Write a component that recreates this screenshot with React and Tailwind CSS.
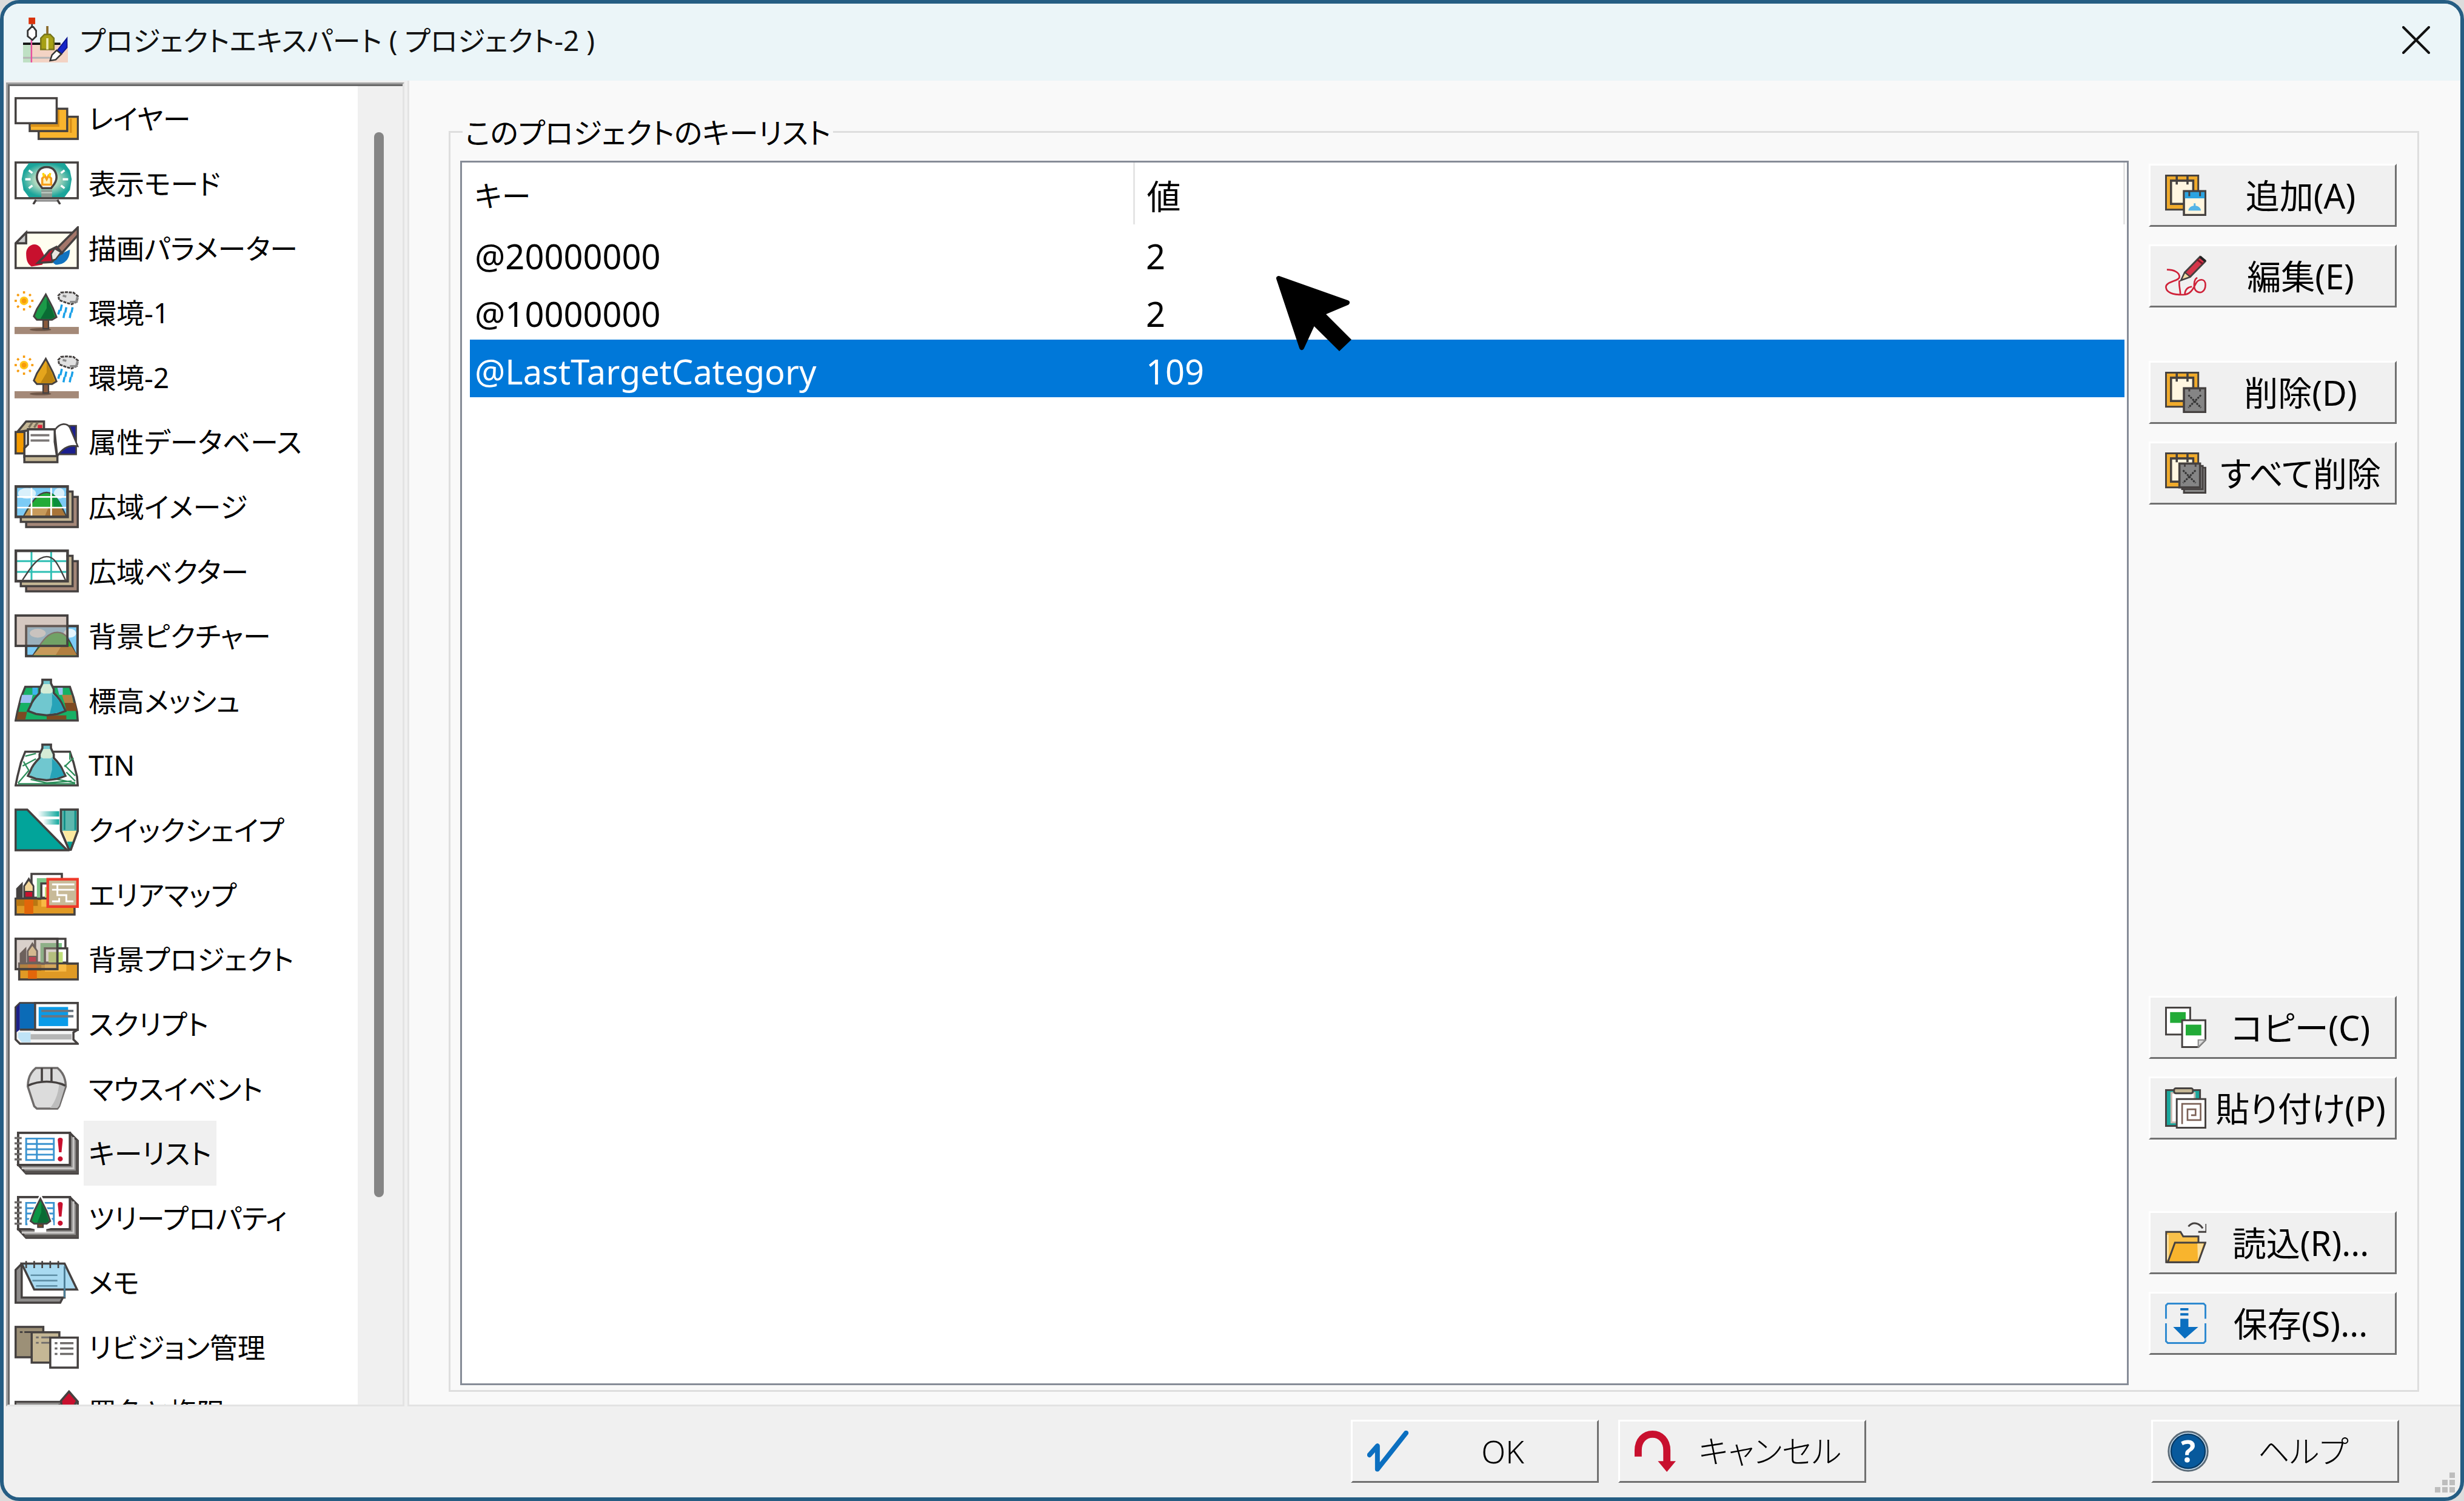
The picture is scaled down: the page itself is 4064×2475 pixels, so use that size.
import React, { useState } from "react";

const INK = "#454140";

/* ---------- sidebar icons, drawn on a 36 x 24 grid ---------- */

function SideIcon({ children }) {
  return (
    <svg viewBox="0 0 36 24" className="h-[71px] w-[106px] shrink-0" fill="none" stroke={INK} strokeWidth="1.2" aria-hidden="true">
      {children}
    </svg>
  );
}

const LayerIcon = () => (
  <SideIcon>
    <rect x="13.5" y="11" width="22" height="12.4" fill="#f9b42d" />
    <path d="M31.500 12v8" stroke="#d98f17" />
    <rect x="8.5" y="6.5" width="21" height="12.5" fill="#f9b42d" />
    <path d="M24.5 7v9H9" stroke="#d98f17" />
    <rect x=".6" y=".6" width="23" height="14" fill="#fff" />
  </SideIcon>
);

const DisplayIcon = () => (
  <SideIcon>
    <defs>
      <radialGradient id="screenGlow">
        <stop offset="0" stopColor="#e4efd2" />
        <stop offset=".5" stopColor="#a9d6bd" />
        <stop offset="1" stopColor="#1ba59b" />
      </radialGradient>
    </defs>
    <rect x=".6" y=".6" width="34.800" height="20" fill="#fff" />
    <path d="M8 1h20l3 4 1 5-1 6-3 4H8l-3-4-1-6 1-5z" fill="url(#screenGlow)" stroke="none" />
    <path d="M6 10h3M27 10h3M8 5l2 1.500M28 5l-2 1.500M8 15l2-1.500M28 15l-2-1.500" stroke="#fff" />
    <path d="M18 3.200c4 0 5.500 2.800 5.500 5.800S21 14 20.500 15h-5c-.5-1-3-3-3-6S14 3.200 18 3.200z" fill="#fff" />
    <path d="M15.500 13V9.500l1.500-1.500 1 2 1-2 1.500 1.500V13z" fill="#fff3bd" stroke="#f6a01c" />
    <path d="M16.500 8.500l-.5-2M19.500 8.500l.5-2" stroke="#ffd800" />
    <path d="M15 16h6v4h-6z" fill="#8d9a92" stroke="none" />
    <path d="M15 17.500h6" stroke="#c2cec6" strokeWidth=".7" />
    <path d="M12 21.500h12v1H12z" fill="#8b8b8b" stroke="none" />
    <path d="M12 21.500l-1.500 2.500M24 21.500l1.500 2.500" />
  </SideIcon>
);

const DrawIcon = () => (
  <SideIcon>
    <path d="M6.500 3.500h28.900v19.900H.6V9.500z" fill="#fffef0" />
    <path d="M6.500 3.500v6H.6z" fill="#c9c9c9" />
    <path d="M6.500 15c0-4 5-7 8-3l3 6-2 3.500-6 1c-2.500-1.500-3-4-3-7.500z" fill="#c8102e" stroke="none" />
    <path d="M31 13l-6 3-4 4 2 1.500c5 0 8-3 8-8.500z" fill="#1173c0" stroke="none" />
    <path d="M35.400.6L24 12l2.500 3 8.900-10z" fill="#a3766a" />
    <path d="M23.500 11.500l-4 2-2.500 3-4 4 8-.5 3-3.500 2.500-1.500z" fill="#c8102e" />
    <path d="M22.500 12.500l-2 3 .5 3.500 2-.5 3-4z" fill="#e8e6e0" strokeWidth=".8" />
  </SideIcon>
);

function EnvIcon({ light, dark }) {
  return (
    <SideIcon>
      <rect x="0" y="20" width="36" height="4" fill="#a48978" stroke="none" />
      <ellipse cx="14.500" cy="21.500" rx="6" ry=".8" fill="#6f5748" stroke="none" />
      <rect x="16" y="15" width="3" height="6" fill="#8a5a3c" strokeWidth=".8" />
      <path d="M17.500 1.800l2.500 4.700 1.500 3 2 5-2.500 1.500h-8.500l-1.700-2 1.700-4L15 6z" fill={light} strokeWidth="1" />
      <path d="M18 4l2.500 5 2 5.500-2 1h-6l3.500-6z" fill={dark} stroke="none" />
      <circle cx="5.300" cy="5.400" r="1.900" fill="#f79b0b" stroke="#ffc61a" strokeWidth="1" />
      <path d="M5.300 0v1.300M5.300 9.500v1.300M0 5.400h1.300M9.300 5.400h1.300M1.500 1.700l.9.9M8.200 8.200l.9.9M9.100 1.700l-.9.9M2.400 8.200l-.9.9" stroke="#f79b0b" />
      <path d="M26 .8l3-.3 4 .3 2.500 2-.5 3-3 1.500-3-.8-4-1.500-.5-2.500z" fill="#e1e1e1" strokeWidth="1" strokeDasharray="1.700 .5" />
      <path d="M31 6h3.500l.8-3" stroke="#8c8c8c" />
      <path d="M27 2.500l2 .5" stroke="#8c8c8c" />
      <path d="M26.500 7.500l-.8 3.500M25.200 10.500l-.7 2.500M29 9l-.6 3M28 12l-.6 3M32.500 9l-.6 3M31.500 12l-.6 3" stroke="#19a0e8" />
    </SideIcon>
  );
}

const DatabaseIcon = () => (
  <SideIcon>
    <path d="M1.500 6.500l5-5.900h10v5h-9z" fill="#c5b795" />
    <path d="M8 4l2-3M11 4l2-3" stroke="#7a6f5c" />
    <rect x="13" y="2.500" width="2.500" height="2.500" fill="#e3223a" stroke="none" />
    <rect x=".6" y="6.500" width="5" height="12" fill="#f59b00" />
    <path d="M30 3h4.500V19H24v-3z" fill="#1b1f8f" strokeWidth=".9" />
    <path d="M22.500 5.500c3-4.500 7-4 8.500-1.500l4.400 10.500c-5-1-8.500 1-11.400 5.500z" fill="#fff" strokeWidth=".9" />
    <path d="M7.500 5h15v7l1.300 8.500H5.500v-5l2-2z" fill="#fff" />
    <path d="M9 8.300h10.500M9 11.300h10.500" stroke="#7b7776" strokeWidth="1.300" />
    <rect x="5.500" y="20" width="18.500" height="3.400" fill="#c5b795" />
  </SideIcon>
);

function Stack({ children }) {
  return (
    <SideIcon>
      <rect x="6.500" y="6.500" width="28.900" height="16.900" fill="#a48778" />
      <rect x="3.500" y="3.500" width="29" height="17" fill="#c5b795" />
      {children}
      <rect x=".7" y=".7" width="29" height="17" strokeWidth="1.500" />
    </SideIcon>
  );
}

const WideImageIcon = () => (
  <Stack>
    <rect x="1" y="1" width="28" height="16" fill="#7ccbf5" stroke="none" />
    <ellipse cx="7" cy="4.500" rx="5" ry="3" fill="#d9f0fb" stroke="none" />
    <ellipse cx="25" cy="4.500" rx="3" ry="3" fill="#d9f0fb" stroke="none" />
    <path d="M5 17.500C9 10 13 4 18 4s8 7 11 13.500z" fill="#22ab38" strokeWidth=".8" />
    <path d="M21 4.500l1 8 5 0c-2-4-4-7-6-8z" fill="#0b8f3c" stroke="none" />
    <path d="M5.500 17.200l3-4.700h17.500l2.500 4.700z" fill="#c79a5b" stroke="none" />
    <path d="M17 17.200l2-4.700h7l2.500 4.700z" fill="#a87438" stroke="none" />
    <path d="M9.500 1v16M20.500 1v16M1 6.500h28M1 12.500h28" stroke="#fff" strokeWidth=".9" />
  </Stack>
);

const WideVectorIcon = () => (
  <Stack>
    <rect x="1" y="1" width="28" height="16" fill="#fff" stroke="none" />
    <path d="M9.500 1v16M20.500 1v16M1 6.500h28M1 12.500h28" stroke="#2fbfb4" strokeWidth="1" />
    <path d="M4.500 17C9 10 13 4 18 4s7 6 10.500 13" strokeWidth=".8" />
  </Stack>
);

const BackPictureIcon = () => (
  <SideIcon>
    <rect x="6.500" y="6.500" width="28.800" height="16.800" fill="#7ccbf5" strokeWidth="1.400" />
    <ellipse cx="31" cy="10.500" rx="3.500" ry="2.500" fill="#e4f4fc" stroke="none" />
    <ellipse cx="13" cy="10.500" rx="4.500" ry="2.500" fill="#e4f4fc" stroke="none" />
    <path d="M10 23.300C15 16 18 10 24 10s7 6 11 13.300z" fill="#22ab38" strokeWidth=".7" />
    <path d="M10.500 22.800l4-4.800h17l3 4.800z" fill="#c79a5b" stroke="none" />
    <path d="M23 22.800l3-4.800h6l3 4.800z" fill="#b27f40" stroke="none" />
    <rect x=".6" y=".6" width="29" height="17" fill="#b39b8c" fillOpacity=".55" strokeWidth="1.300" />
    <rect x="6.500" y="6.500" width="28.800" height="16.800" strokeWidth=".8" strokeOpacity=".6" />
  </SideIcon>
);

const Cone = () => (
  <g>
    <path d="M15.600 0v2.500L14 6v2c-1.500 1.500-4 4-5 7l-1.500 3 4.500 1.700 6 .8 6-.8 4.500-1.700L27 15c-1-3-3.500-5.500-5-7V6l-1.600-3.500V0z" fill="#70c7cf" />
    <path d="M21 8.500c2 1.500 4.500 4 5.500 6.500l1.200 2.800-4 1.300-4 .5 1.300-5z" fill="#27a3b8" stroke="none" />
    <path d="M16.200 3h3.600L21.300 6v1.500l-1.300.8h-4l-1.300-.8V6z" fill="#d5ecd6" stroke="none" />
    <path d="M15.200.6h5.600" />
  </g>
);

const MeshIcon = () => (
  <SideIcon>
    <path d="M6 4.500h25l2 6 2 8 .4 4.900H.6l1-4.900 2-8z" fill="#16b166" />
    <path d="M4.200 9h6L9 13.500H3.200zM27 5h-3l1 4h2z" fill="#9cc0f2" stroke="none" />
    <path d="M2 18.500h5l-1 4.400H1.200zM28 13.500h6l1 4.500h-6zM18 20.500h11v2.400H18z" fill="#7d4a22" stroke="none" />
    <path d="M26.500 9h5.500l1 4.500h-5z" fill="#b57f42" stroke="none" />
    <path d="M10 5h3v4h-3z" fill="#3fb4ec" stroke="none" />
    <Cone />
  </SideIcon>
);

const TinIcon = () => (
  <SideIcon>
    <path d="M6 4.500h25l2 6 2 8 .4 4.900H.6l1-4.900 2-8z" fill="#fff" />
    <path d="M6 7l6-1.500M4.500 12.500L12 8.500M5 10l3 5M2 22l6-7M2 22.500h32M9 20l9 2 14-1M33 8l-5 5M28 12l6 6M31 5v4M29 16l5 5M24 20l10 2" stroke="#2e8f5c" strokeWidth=".8" />
    <Cone />
  </SideIcon>
);

const QuickShapeIcon = () => (
  <SideIcon>
    <defs>
      <linearGradient id="speed">
        <stop offset="0" stopColor="#fff" />
        <stop offset="1" stopColor="#0fa79c" />
      </linearGradient>
    </defs>
    <path d="M.6.600h6.500L29.500 23.400H.6z" fill="#02a49a" />
    <rect x="13" y="1.500" width="12" height="3" fill="url(#speed)" stroke="none" />
    <rect x="16" y="6" width="9" height="3" fill="url(#speed)" stroke="none" />
    <path d="M26 .6h9.400v12L31.500 23h-1L26 12.500z" fill="#fff" />
    <rect x="26.500" y="1" width="8.500" height="11.500" fill="#5db8ae" stroke="none" />
    <path d="M28 1v11M34 1v11" stroke="#0d8e86" strokeWidth=".9" />
    <path d="M27 12.500h8l-2.500 6h-3z" fill="#fce9a0" stroke="none" />
    <path d="M29.500 18.500h3l-1 4h-1z" fill="#02a49a" stroke="none" />
    <path d="M26 12.500V.6h9.400v11.900" />
    <path d="M26 12.500l4.500 10.500h1l3.900-10.500" />
  </SideIcon>
);

const BoxContents = () => (
  <g>
    <path d="M9.500 14V.600h17V14z" fill="#fff" />
    <rect x="12.500" y="3" width="12" height="11" fill="#7fc68a" stroke="none" />
    <path d="M15 14V6h12.500v8z" fill="#fff" />
    <rect x="17" y="8" width="8" height="6" fill="#bfe07a" stroke="none" />
    <path d="M1.500 14V9l2.500-2.500V14z" fill="#454140" />
    <path d="M5.500 14V7.500l2.500-4 2.500 4V14z" fill="#c8102e" />
    <path d="M5.500 10.500v-3L8 4l2.500 3.500v3z" fill="#f5d79a" strokeWidth=".7" />
    <path d="M.6 14.500h33v8.900H.6z" fill="#e09a25" />
    <path d="M1 15h12v3.500H1z" fill="#b97712" stroke="none" />
    <path d="M5.500 15h5v8h-5z" fill="#e2660a" stroke="none" />
    <path d="M15 15h12v4H15z" fill="#f8b944" stroke="none" />
  </g>
);

const AreaMapIcon = () => (
  <SideIcon>
    <BoxContents />
    <rect x="18.600" y="3.600" width="16.700" height="15.300" fill="#c8ba98" stroke="#ee3a2a" strokeWidth="1.500" />
    <path d="M21 6.500h12.500M21 9.500h12.500M24 6.500v6h5v3.500h4M21 16h4v-2" stroke="#fff" strokeWidth="1" />
  </SideIcon>
);

const BackProjectIcon = () => (
  <SideIcon>
    <g transform="translate(2 0)">
      <BoxContents />
    </g>
    <rect x=".6" y=".6" width="23.400" height="17" fill="#a58f82" fillOpacity=".42" strokeWidth="1.300" />
  </SideIcon>
);

const ScriptIcon = () => (
  <SideIcon>
    <path d="M3 .6h32.400v15L33 17v4l2.400 2.400H3L.6 21V3z" fill="#f4f4f4" />
    <path d="M1 3l2-2v14.500l-2 1.500z" fill="#1d2088" stroke="none" />
    <rect x="3" y="1" width="8" height="14.500" fill="#0b6bb7" stroke="none" />
    <rect x="11.500" y=".6" width="23.900" height="15" fill="#fff" />
    <rect x="13.500" y="2.800" width="16.500" height="10.700" fill="#0a9be8" stroke="none" />
    <path d="M15 5h18M15 8h18" stroke="#6b7680" strokeWidth="1.300" />
    <path d="M3 15.500h32.500" />
    <path d="M2 17h7v5.500H4L2 20z" fill="#bfe3f6" stroke="none" />
    <path d="M9 19.500h23" stroke="#b5b5b5" strokeWidth="3" />
  </SideIcon>
);

const MouseIcon = () => (
  <SideIcon>
    <path d="M12 .6h12c3 2.400 4.700 6 4.700 10.400L25 22l-1 1.400H12.500L11 22 7.400 11C7.400 6.600 9 3 12 .6z" fill="#dcdcdc" stroke="#6e6b6a" />
    <path d="M28.300 9.500c-1-.5-2-.9-3.300-1.100-.2 5-1.500 10-5 14.600h4l1-1.200L28.300 11z" fill="#bdbdbd" stroke="none" />
    <path d="M7.500 10.500C14 7.500 22 7.500 28.500 10.500" />
    <path d="M15.300.6v7.800M20.700.6v7.800" />
  </SideIcon>
);

function Notebook({ children }) {
  return (
    <SideIcon>
      <path d="M2 18.500l4.500 4.900h28.900V5L31 .6z" fill="#8e8c8b" />
      <path d="M4 20.500h29V3" stroke="#c9c7c6" strokeWidth="1" />
      <path d="M5.500 22.500H35V4.500" stroke="#55514f" strokeWidth="1.400" />
      <rect x="2" y=".6" width="29" height="18" fill="#fff" strokeWidth="1.300" />
      <path d="M0 3.500h4M0 6.500h4M0 9.500h4M0 12.500h4M0 15.500h4" stroke="#6e6b6a" />
      {children}
      <path d="M24.200 4.500c0-1.500 2.800-1.500 2.800 0l-.7 7h-1.400z" fill="#c8102e" stroke="none" />
      <circle cx="25.600" cy="15.200" r="1.400" fill="#c8102e" stroke="none" />
    </SideIcon>
  );
}

const SheetLines = () => (
  <path d="M6.500 3.800h15.500v12H6.500zM12.500 3.800v12M6.500 6.800h15.500M6.500 9.800h15.500M6.500 12.800h15.500" stroke="#3a93d0" strokeWidth="1" />
);

const KeyListIcon = () => (
  <Notebook>
    <SheetLines />
  </Notebook>
);

const TreePropIcon = () => (
  <Notebook>
    <SheetLines />
    <path d="M14.500 0L8 15v2l4 1v1.500h5V18l4-1v-2z" fill="#fff" stroke="#fff" strokeWidth="1.500" />
    <rect x="13" y="14.500" width="3" height="3" fill="#7a4a2a" strokeWidth=".7" />
    <path d="M14.500 1.500l3.500 7 2 5.500-2 1.500h-7L9 14l2-5.500z" fill="#0c9444" strokeWidth="1" />
    <path d="M15 4l2.500 5 1.700 5-1.500 1h-5L15 9z" fill="#0a6b34" stroke="none" />
  </Notebook>
);

const MemoIcon = () => (
  <SideIcon>
    <path d="M.6 5l3-3h24v17.500l-2 3.900H.6z" fill="#8e8c8b" />
    <path d="M4 3h24v17.500H4z" fill="#fff" />
    <path d="M4 1.500h24l7 14.500H11z" fill="#a9daf1" />
    <path d="M28 3v17.500" stroke="#4d7f98" strokeWidth="1" />
    <path d="M9 8h15M10 11h14M12 14h12" stroke="#5f8fa6" strokeWidth=".9" />
    <path d="M6.500 0v4M11 0v4M15.500 0v4M20 0v4M24.500 0v4" strokeWidth=".9" />
  </SideIcon>
);

const RevisionIcon = () => (
  <SideIcon>
    <rect x=".6" y=".6" width="15.500" height="17" fill="#9c9077" />
    <path d="M3 3.500h1.500M5.500 3.500h5" strokeWidth="1" />
    <rect x="9.600" y="3.600" width="15.500" height="17" fill="#c5b795" />
    <path d="M12 6.500h1.500M15 6.500h5M12 9.500h1.500M15 9.500h5" stroke="#6e6b6a" strokeWidth="1" />
    <rect x="20" y="6.600" width="15.400" height="16.800" fill="#fff" />
    <path d="M22.500 9.700H24M25.500 9.700H33M22.500 12.700H24M25.500 12.700H33M22.500 15.700H24M25.500 15.700H33" stroke="#6e6b6a" />
  </SideIcon>
);

const SignIcon = () => (
  <SideIcon>
    <rect x=".6" y="6.600" width="34.800" height="16.800" fill="#e9e4dc" />
    <rect x="1" y="7" width="34" height="2" fill="#8e8c8b" stroke="none" />
    <path d="M30.500.8l4.500 5.200-2.500 4.500-6-.5-.5-4z" fill="#c8102e" />
    <path d="M25 8l3 3-5 2z" fill="#f5d79a" strokeWidth=".6" />
  </SideIcon>
);

const sections = [
  ["レイヤー", <LayerIcon />],
  ["表示モード", <DisplayIcon />],
  ["描画パラメーター", <DrawIcon />],
  ["環境-1", <EnvIcon light="#1b9a48" dark="#0a6b34" />],
  ["環境-2", <EnvIcon light="#e5a51c" dark="#bd8410" />],
  ["属性データベース", <DatabaseIcon />],
  ["広域イメージ", <WideImageIcon />],
  ["広域ベクター", <WideVectorIcon />],
  ["背景ピクチャー", <BackPictureIcon />],
  ["標高メッシュ", <MeshIcon />],
  ["TIN", <TinIcon />],
  ["クイックシェイプ", <QuickShapeIcon />],
  ["エリアマップ", <AreaMapIcon />],
  ["背景プロジェクト", <BackProjectIcon />],
  ["スクリプト", <ScriptIcon />],
  ["マウスイベント", <MouseIcon />],
  ["キーリスト", <KeyListIcon />],
  ["ツリープロパティ", <TreePropIcon />],
  ["メモ", <MemoIcon />],
  ["リビジョン管理", <RevisionIcon />],
  ["署名と権限", <SignIcon />],
];

/* ---------- button icons, drawn on a 23 x 23 grid ---------- */

function ButtonIcon({ children }) {
  return (
    <svg viewBox="0 0 23 23" className="size-[68px] shrink-0" fill="none" stroke={INK} strokeWidth="1" aria-hidden="true">
      {children}
    </svg>
  );
}

const Board = () => (
  <g>
    <rect x=".5" y=".5" width="18" height="19" fill="#f0ab2c" />
    <rect x="3.300" y="3.300" width="12.400" height="13" fill="#fff6e0" strokeWidth="1.200" />
    <path d="M3 3.300h13M6.500 0v5.500M12.500 0v5.500" strokeWidth="1.200" />
  </g>
);

const AddIcon = () => (
  <ButtonIcon>
    <Board />
    <rect x="10.500" y="9.200" width="12" height="13.300" fill="#fff6e0" strokeWidth="1.200" />
    <rect x="11" y="9.700" width="11" height="3.500" fill="#2ba3e0" stroke="none" />
    <path d="M13.500 9v3M19.500 9v3" />
    <path d="M13 20c0-1.500 1.500-2.500 3-2.700V16h1v1.300c1.500.2 3 1.200 3 2.700z" fill="#55b4e6" stroke="none" />
  </ButtonIcon>
);

const EditIcon = () => (
  <ButtonIcon>
    <path d="M1 8c4 0 7 1.500 7 4S0 14.500 0.500 18s5.500 4 9.500 4 5.500-3 7-6 5.500-3.500 5.500.500-3 5-5 3.500S16 13 18 12.500M8 14c-.5 3 .5 5 .5 7.500M11 22c0-3 2-4.500 4-4.500" stroke="#cf2138" strokeWidth=".9" />
    <path d="M19.500.8l3 2.500L14 12l-5 1.800L11 9.500z" fill="#d5364a" />
    <path d="M18 2.500l3 2.300" stroke="#7a1626" />
    <path d="M11 9.500l3 2.500-5 1.800z" fill="#f2dba5" strokeWidth=".7" />
    <path d="M19.500.8l3 2.500" strokeWidth="1.400" stroke="#222" />
  </ButtonIcon>
);

const Cross = ({ x, y }) => (
  <path d={`M${x} ${y}l7 7M${x + 7} ${y}l-7 7`} stroke="#333" strokeDasharray="1.100 .5" />
);

const DeleteIcon = () => (
  <ButtonIcon>
    <Board />
    <rect x="10.500" y="9.200" width="12" height="13.300" fill="#858585" strokeWidth="1.200" />
    <Cross x={13} y={13} />
    <path d="M13.500 9v2M19.500 9v2" />
  </ButtonIcon>
);

const DeleteAllIcon = () => (
  <ButtonIcon>
    <Board />
    <path d="M11 8.500h11.500v14H10.500z" fill="#8a8a8a" />
    <path d="M9.500 7.500H21v13H9.500z" fill="#8a8a8a" />
    <rect x="8" y="6.200" width="11.500" height="13.300" fill="#858585" strokeWidth="1.200" />
    <Cross x={10} y={10} />
    <path d="M11 6v2M17 6v2" />
  </ButtonIcon>
);

const CopyIcon = () => (
  <ButtonIcon>
    <rect x=".5" y=".5" width="13.500" height="15" fill="#fff" />
    <rect x="2.800" y="3" width="8.700" height="6" fill="#22ab38" stroke="none" />
    <path d="M9.500 7.500h13v11l-4 4h-9z" fill="#fff" />
    <path d="M22.500 18.500l-4 4v-4z" fill="#dcdcdc" strokeWidth=".7" stroke="#8a8a8a" />
    <rect x="11.500" y="10" width="8.700" height="6" fill="#22ab38" stroke="none" />
  </ButtonIcon>
);

const PasteIcon = () => (
  <ButtonIcon>
    <rect x=".5" y="1.500" width="19" height="20" fill="#1aa89d" />
    <path d="M3.500 3h13v16.500h-13z" fill="#fff" stroke="#c8b8b0" />
    <rect x="5" y=".5" width="10.500" height="2.800" rx="1" fill="#c5b795" />
    <rect x="6.500" y="6.500" width="16" height="16" fill="#fff" />
    <path d="M9.500 20.500V9.200h10.300v9h-7.300V12.200h4.500v3.300h-2.500" stroke="#7d6257" strokeWidth=".9" />
  </ButtonIcon>
);

const LoadIcon = () => (
  <ButtonIcon>
    <path d="M.6 22V5.500h8l1.500 2.500h8.500v3.500L14 22.400H.6z" fill="#f9c14b" />
    <path d="M1.500 7v14" stroke="#fbe0a0" />
    <path d="M5.500 11.500h17L18.500 22.400H1.500z" fill="#f8b42d" />
    <path d="M18 12h3.500l-3.200 9.500z" fill="#fbe0a0" stroke="none" />
    <path d="M13 2.500c2.500-3 6-2 8 1M23 1v4.500h-4.500" />
  </ButtonIcon>
);

const SaveIcon = () => (
  <ButtonIcon>
    <path d="M.5 9V1.500l1-1h20l1 1V9M.5 11.500v10l1 1h20l1-1v-10" stroke="#2f8ad0" />
    <path d="M8.500 3.700h4.500M8.500 6.500h4.500" stroke="#0b6fc0" strokeWidth="1.300" />
    <path d="M8.500 9h4.500v4.500H18.500L11 20 4.500 13.500h4z" fill="#0b6fc0" stroke="none" />
  </ButtonIcon>
);

const OkIcon = () => (
  <ButtonIcon>
    <path d="M1.300 13.500l4.400-5v13L21.700 1.300" stroke="#0b6fc0" strokeWidth="2.700" strokeLinecap="round" strokeLinejoin="round" />
  </ButtonIcon>
);

const CancelIcon = () => (
  <ButtonIcon>
    <path d="M2 14.500V11C2 5.500 5.500 2 10 2s8 3.500 8 9v7" stroke="#c8102e" strokeWidth="4" />
    <path d="M13 17h10l-5 6z" fill="#c8102e" stroke="none" />
  </ButtonIcon>
);

const HelpIcon = () => (
  <ButtonIcon>
    <circle cx="11.500" cy="11.500" r="10.900" fill="#cfe3f3" stroke="#5b6b78" />
    <circle cx="11.500" cy="11.500" r="9.500" fill="#08599c" stroke="#0a3c66" strokeWidth=".8" />
    <text x="11.500" y="17.500" textAnchor="middle" fontSize="17" fontWeight="700" fontFamily="Noto Sans, sans-serif" fill="#fff" stroke="none">
      ?
    </text>
  </ButtonIcon>
);

const ExpertIcon = () => (
  <svg viewBox="0 0 24 24" className="size-[74px] shrink-0" fill="none" aria-hidden="true">
    <rect x="0" y="14" width="4.500" height="10" fill="#bfe0c4" />
    <rect x="4.500" y="14" width="19.500" height="10" fill="#f3d3c4" />
    <path d="M0 14h20" stroke="#111" strokeWidth="1.200" />
    <path d="M0 21.500h16" stroke="#b5b5b5" strokeWidth="1" />
    <path d="M4.500 12v12" stroke="#ea4fa0" strokeWidth=".8" />
    <rect x="3" y="0" width="3.500" height="3.500" fill="#d9330c" />
    <path d="M4.800 3.500v2M2.500 7l2-2h1l1.500 2v3L5 12 2.500 10z" stroke="#333" strokeWidth=".9" fill="#fff" />
    <path d="M13 4.500v5" stroke="#8a6a2a" strokeWidth="1.200" />
    <path d="M9.500 17v-6l2-2h3l2 2v6z" fill="#a6a015" stroke="#77761a" strokeWidth=".8" />
    <path d="M13 11v6" stroke="#ece9b0" strokeWidth="1.200" />
    <path d="M23.500 11v5l-3 3.500-2.500-1.500z" fill="#1525c8" stroke="#0c1690" strokeWidth=".6" />
    <path d="M18 17.500l2.500 2-3 3-3 .5 1-3z" fill="#fff" stroke="#333" strokeWidth=".8" />
  </svg>
);

/* ---------- controls ---------- */

function PushButton({ icon, children, thin }) {
  return (
    <button
      type="button"
      className={
        "flex h-[104px] w-[409px] shrink-0 items-center border-[3px] border-t-white border-r-[#717171] border-b-[#717171] border-l-white bg-[#f0f0f0] pl-6 whitespace-nowrap text-black " +
        (thin ? "text-[52px] font-light" : "text-[56px]")
      }
    >
      {icon}
      <span className="flex-1 text-center leading-[64px]">{children}</span>
    </button>
  );
}

const rows = [
  ["@20000000", "2"],
  ["@10000000", "2"],
  ["@LastTargetCategory", "109"],
];

function KeyTable() {
  const [selected, setSelected] = useState(2);
  return (
    <table className="w-full table-fixed border-collapse text-left text-[56px] leading-[64px]">
      <colgroup>
        <col className="w-[1095px]" />
        <col />
      </colgroup>
      <thead>
        <tr className="h-[102px]">
          <th scope="col" className="border-r-[3px] border-[#e5e5e5] p-0 pt-2 pl-2 text-[48px] font-normal">キー</th>
          <th scope="col" className="border-r-[3px] border-[#e5e5e5] p-0 pt-2 pl-5 font-normal">値</th>
        </tr>
      </thead>
      <tbody>
        {rows.map(([key, value], i) => (
          <tr
            key={key}
            onClick={() => setSelected(i)}
            className={i === selected ? "h-[95px] bg-[#0078d9] text-white" : "h-[95px]"}
          >
            <td className="p-0 pt-2 pl-2">{key}</td>
            <td className="p-0 pt-2 pl-5">{value}</td>
          </tr>
        ))}
      </tbody>
    </table>
  );
}

function Sidebar() {
  const [active, setActive] = useState("キーリスト");
  return (
    <nav className="mt-[3px] flex w-[657px] shrink-0 overflow-hidden border-[3px] border-t-[#a0a0a0] border-r-[#e3e3e3] border-b-[#e3e3e3] border-l-[#a0a0a0] bg-white">
      <ul className="grid h-[2242px] min-w-0 flex-1 auto-rows-fr border-t-[3px] border-l-[3px] border-[#696969]">
        {sections.map(([label, icon]) => (
          <li key={label} className="min-h-0">
            <button type="button" onClick={() => setActive(label)} className="flex h-full items-center gap-2 pl-2 text-[46px] leading-[60px] whitespace-nowrap">
              {icon}
              <span className={active === label ? "flex h-full items-center bg-[#f0f0f0] px-2" : "flex h-full items-center px-2"}>{label}</span>
            </button>
          </li>
        ))}
      </ul>
      <div className="flex w-[74px] flex-col items-center border-t-[3px] border-[#696969] bg-[#f0f0f0] pt-[76px] pr-1">
        <div className="h-[1756px] w-4 rounded-full bg-[#858585]" />
      </div>
    </nav>
  );
}

export default function App() {
  return (
    <div className="h-screen bg-[#dcdcdc] font-['Noto_Sans','Noto_Sans_CJK_JP',sans-serif] text-black [font-feature-settings:'palt']">
      <div className="flex h-full flex-col overflow-hidden rounded-[32px] border-[6px] border-[#255d83] bg-[#f0f0f0]">
        <header className="flex h-[127px] shrink-0 items-center bg-[#ebf5f8] pr-[50px] pb-2 pl-8">
          <ExpertIcon />
          <h1 className="flex-1 pl-5 text-[46px] leading-[60px] text-[#111]">プロジェクトエキスパート ( プロジェクト-2 )</h1>
          <button type="button" aria-label="閉じる">
            <svg viewBox="0 0 46 46" className="size-[46px]" fill="none" stroke="#111" strokeWidth="4" strokeLinecap="round" aria-hidden="true">
              <path d="M2 2l42 42M44 2L2 44" />
            </svg>
          </button>
        </header>

        <main className="flex min-h-0 flex-1 gap-[5px] pl-1">
          <Sidebar />
          <section className="flex min-w-0 flex-1 border-b-[3px] border-l-[3px] border-[#e3e3e3] bg-[#f9f9f9] pt-[54px] pr-[68px] pb-[21px] pl-[65px]">
            <fieldset className="relative flex min-w-0 flex-1 border-[3px] border-[#dedede] px-4">
              <legend className="ml-1 h-[60px] px-1 text-[48px] leading-[64px]">このプロジェクトのキーリスト</legend>
              <div className="flex h-full min-w-0 flex-1 gap-[33px]">
                <div className="relative mt-[18px] mb-2 min-w-0 flex-1 border-[3px] border-[#868c97] bg-white pr-[3px] pl-[13px]">
                  <KeyTable />
                  <svg viewBox="0 0 124 124" className="pointer-events-none absolute top-[187px] left-[1343px] size-[124px]" aria-hidden="true">
                    <path d="M4 4L117 44L79 60L124 105L104 124L59.500 80L42 118Z" fill="#000" />
                    <path d="M59.500 80L42 118L4 4L117 44L79 60" fill="#000" stroke="#000" strokeWidth="8" strokeLinejoin="round" strokeLinecap="butt" />
                  </svg>
                </div>
                <div className="mt-[23px] mr-[18px] mb-[58px] flex flex-col gap-[29px]">
                  <PushButton icon={<AddIcon />}>追加(A)</PushButton>
                  <PushButton icon={<EditIcon />}>編集(E)</PushButton>
                  <div className="h-[30px]" />
                  <PushButton icon={<DeleteIcon />}>削除(D)</PushButton>
                  <PushButton icon={<DeleteAllIcon />}>すべて削除</PushButton>
                  <div className="flex-1" />
                  <PushButton icon={<CopyIcon />}>コピー(C)</PushButton>
                  <PushButton icon={<PasteIcon />}>貼り付け(P)</PushButton>
                  <div className="h-[60px]" />
                  <PushButton icon={<LoadIcon />}>読込(R)...</PushButton>
                  <PushButton icon={<SaveIcon />}>保存(S)...</PushButton>
                </div>
              </div>
            </fieldset>
          </section>
        </main>

        <footer className="flex h-[150px] shrink-0 items-start pt-[22px] pr-[9px]">
          <div className="flex flex-1 justify-end gap-8">
            <PushButton thin icon={<OkIcon />}>OK</PushButton>
            <PushButton thin icon={<CancelIcon />}>キャンセル</PushButton>
          </div>
          <div className="ml-[470px]">
            <PushButton thin icon={<HelpIcon />}>ヘルプ</PushButton>
          </div>
          <svg viewBox="0 0 33 33" className="mb-2 ml-[59px] size-[33px] self-end" fill="#bdbdbd" aria-hidden="true">
            <path d="M24 0h9v9h-9zM12 12h9v9h-9zM24 12h9v9h-9zM0 24h9v9H0zM12 24h9v9h-9zM24 24h9v9h-9z" />
          </svg>
        </footer>
      </div>
    </div>
  );
}
